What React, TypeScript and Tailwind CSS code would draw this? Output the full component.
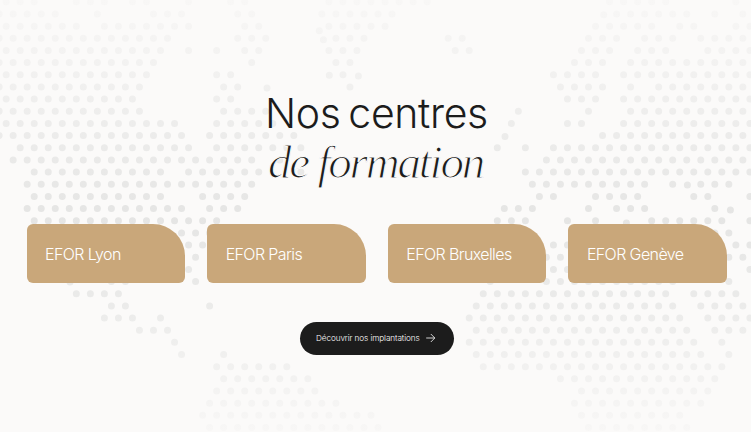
import React from "react";

type Run = [number, number];

// Columns that carry a dot in each row of the world map; odd rows are shifted by half a step.
const MAP_ROWS: Run[][] = [
  [[0, 2], [5, 7], [9, 10], [13, 13], [16, 17], [23, 30], [43, 47], [52, 52]],
  [[-1, 3], [6, 6], [10, 12], [16, 17], [22, 27], [43, 48], [50, 50], [52, 52]],
  [[0, 5], [7, 13], [17, 18], [23, 27], [42, 46], [48, 49], [52, 53]],
  [[-1, 11], [16, 18], [23, 25], [31, 32], [41, 43], [45, 47], [49, 52]],
  [[0, 11], [13, 13], [15, 15], [17, 18], [23, 25], [32, 33], [41, 43], [45, 47], [50, 53]],
  [[-1, 10], [17, 17], [23, 24], [40, 42], [44, 52]],
  [[0, 10], [15, 16], [39, 42], [44, 53]],
  [[-1, 9], [15, 16], [24, 24], [39, 42], [44, 44], [46, 52]],
  [[0, 9], [15, 16], [40, 42], [44, 53]],
  [[-1, 9], [15, 18], [36, 36], [41, 41], [44, 52]],
  [[0, 12], [15, 19], [36, 36], [40, 41], [44, 53]],
  [[-1, 12], [14, 20], [42, 52]],
  [[1, 13], [15, 21], [35, 35], [37, 37], [39, 53]],
  [[0, 17], [19, 19], [38, 52]],
  [[2, 11], [13, 18], [21, 21], [37, 53]],
  [[1, 17], [37, 45], [47, 47], [49, 51]],
  [[2, 11], [14, 17], [38, 39], [42, 45], [49, 50], [53, 53]],
  [[1, 12], [14, 16], [35, 37], [41, 41], [43, 45], [50, 50]],
  [[2, 15], [35, 37], [40, 40], [42, 42], [46, 51], [53, 53]],
  [[12, 14], [50, 51]],
  [[13, 14], [39, 40], [52, 53]],
  [[13, 13], [38, 39], [51, 52]],
  [[13, 13], [39, 40], [53, 53]],
  [[7, 8], [13, 13], [34, 34], [38, 47], [51, 51]],
  [[5, 8], [34, 47], [49, 52]],
  [[7, 8], [14, 14], [33, 47], [49, 52]],
  [[7, 9], [11, 11], [33, 48], [50, 53]],
  [[9, 11], [33, 48], [50, 52]],
  [[12, 12], [33, 49], [51, 51]],
  [[12, 12], [15, 15], [33, 49], [51, 51]],
  [[15, 20], [34, 51]],
  [[15, 21], [39, 50]],
  [[15, 22], [41, 50]],
  [[14, 23], [40, 49]],
  [[14, 26], [41, 48]],
  [[14, 26], [41, 48]],
];

// Small islands that sit off the regular lattice.
const ISLANDS: Run[] = [
  [603.7, 14.7], [319.3, 30.7], [323.4, 39.8], [329.3, 75.3], [343, 74.7], [358.4, 76.1],
  [267, 88.1], [505, 136.4], [687.4, 185], [730.4, 210], [626.4, 223], [70, 282],
];

const dots: Run[] = MAP_ROWS.flatMap((runs, row) =>
  runs.flatMap(([from, to]) =>
    Array.from({ length: to - from + 1 }, (_, i): Run => [
      (row % 2 ? 13.15 : 6.15) + (from + i) * 14.033,
      1.8 + row * 12.163,
    ]),
  ),
).concat(ISLANDS);

function DottedMap() {
  return (
    <svg className="absolute inset-0" width="751" height="432" viewBox="0 0 751 432" aria-hidden="true">
      <defs>
        <linearGradient id="fade" gradientUnits="userSpaceOnUse" x1="0" y1="0" x2="0" y2="432">
          <stop offset="0" stopColor="#f8f7f6" />
          <stop offset="0.5" stopColor="#e5e5e4" />
          <stop offset="0.68" stopColor="#eaeae9" />
          <stop offset="1" stopColor="#f8f7f6" />
        </linearGradient>
      </defs>
      <path
        fill="url(#fade)"
        d={dots.map(([x, y]) => `M${x - 3.5} ${y}a3.5 3.5 0 1 0 7 0a3.5 3.5 0 1 0 -7 0`).join("")}
      />
    </svg>
  );
}

const centres = ["EFOR Lyon", "EFOR Paris", "EFOR Bruxelles", "EFOR Genève"];

export default function App() {
  return (
    <main className="relative h-[432px] w-[751px] overflow-hidden bg-[#fbfaf9] font-['Inter',sans-serif] text-[#1c1c1c]">
      <DottedMap />
      <div className="relative flex flex-col items-center pt-[88px]">
        <h2 className="flex flex-col items-center whitespace-nowrap">
          <span className="h-[50px] pl-[2px] text-[41px] font-light leading-[50px] tracking-[-0.35px] [word-spacing:-3.5px]">
            Nos centres
          </span>
          <span className="h-[50px] text-[47px] italic leading-[48px] tracking-[-2.2px] font-['Liberation_Serif',serif] [-webkit-text-stroke:1.15px_#fbfaf9]">
            de formation
          </span>
        </h2>
        <ul className="mt-[36.4px] grid w-full grid-cols-4 gap-[22px] pl-[26.5px] pr-[24px]">
          {centres.map((name) => (
            <li
              key={name}
              className="flex h-[59px] items-center rounded-[6px] rounded-tr-[32px] bg-[#c9a77a] pl-[18.5px] text-white"
            >
              <span className="whitespace-nowrap text-[16px] font-light leading-6 tracking-[-0.6px]">{name}</span>
            </li>
          ))}
        </ul>
        <button className="ml-[2.5px] mt-[38.6px] flex h-[33px] w-[154.5px] items-center rounded-full bg-[#1c1c1c] pl-[16.5px] text-white">
          <span className="w-[104px] whitespace-nowrap text-left text-[8.2px] font-light tracking-[-0.1px]">
            Découvrir nos implantations
          </span>
          <svg className="ml-[6px]" width="10" height="10" viewBox="0 0 10 10" fill="none" stroke="currentColor" strokeWidth="0.8">
            <path d="M0.2 5H8.6M4.8 1L8.8 5L4.8 9" />
          </svg>
        </button>
      </div>
    </main>
  );
}
